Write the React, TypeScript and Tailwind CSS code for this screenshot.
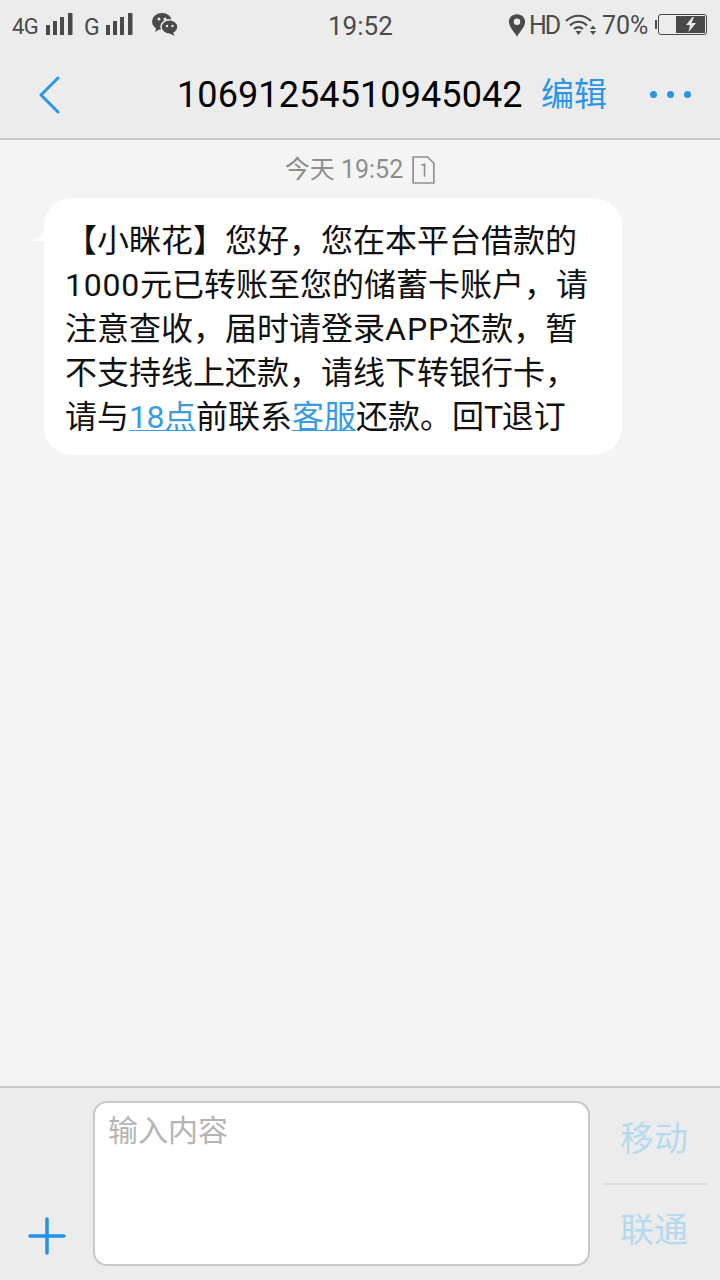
const cjk = "font-['Roboto','Noto_Sans_CJK_SC',sans-serif]";

function Bars({ className = "" }: { className?: string }) {
  return (
    <svg width="28" height="24" viewBox="0 0 28 24" className={className} fill="#4a4a4a">
      <rect x="0" y="12" width="4" height="10" />
      <rect x="7" y="8" width="4" height="14" />
      <rect x="14" y="4" width="4" height="18" />
      <rect x="22" y="0" width="4.5" height="22" />
    </svg>
  );
}

function WeChat() {
  return (
    <svg width="26" height="24" viewBox="0 0 26 24">
      <ellipse cx="10" cy="9.5" rx="10" ry="8.5" fill="#4a4a4a" />
      <path d="M4 15 L3.5 20 L9 16 Z" fill="#4a4a4a" />
      <ellipse cx="17.5" cy="15" rx="8.5" ry="7.2" fill="#4a4a4a" stroke="#ececec" strokeWidth="1.5" />
      <path d="M21 20 L22.5 24 L17 21 Z" fill="#4a4a4a" />
      <circle cx="7" cy="7" r="1.5" fill="#ececec" />
      <circle cx="13" cy="7" r="1.5" fill="#ececec" />
      <circle cx="15" cy="14" r="1.2" fill="#ececec" />
      <circle cx="20.5" cy="14" r="1.2" fill="#ececec" />
    </svg>
  );
}

function Link({ children }: { children: React.ReactNode }) {
  return <span className="text-[#3a9be2] underline underline-offset-2 decoration-1">{children}</span>;
}

export default function App() {
  return (
    <div className={`${cjk} w-[720px] h-[1280px] flex flex-col bg-[#f4f4f4] overflow-hidden`}>
      <header className="h-[140px] shrink-0 bg-[#ececec] border-b-2 border-[#c8c8c8] flex flex-col">
        <div className="h-[50px] flex items-center justify-between pl-[12px] pr-[13px] text-[#4a4a4a] relative">
          <div className="flex items-center">
            <span className="text-[22px] leading-none mt-[4px] w-[33px] tracking-[-0.5px]">4G</span>
            <Bars className="ml-[1px]" />
            <span className="text-[23px] leading-none mt-[4px] ml-[10px] w-[21px]">G</span>
            <Bars className="ml-[1px]" />
            <span className="ml-[18px] -mt-[2px]"><WeChat /></span>
          </div>
          <span className="absolute left-[328px] top-[8px] text-[26px] leading-[36px]">19:52</span>
          <div className="flex items-center">
            <svg width="18" height="26" viewBox="0 0 20 26" className="mr-[3px]">
              <path d="M10 1 C4.5 1 1 5 1 9.5 C1 15 7 21 10 26 C13 21 19 15 19 9.5 C19 5 15.5 1 10 1 Z" fill="#4a4a4a" />
              <circle cx="10" cy="9.5" r="3.6" fill="#ececec" />
            </svg>
            <span className="text-[25px] leading-none tracking-[-2px] w-[36px]">HD</span>
            <svg width="32" height="24" viewBox="0 0 32 24" fill="none" stroke="#4a4a4a" strokeWidth="2.2">
              <path d="M1 8 C8 1 19 1 26 8" />
              <path d="M5 12.5 C10 7.5 17 7.5 22 12.5" />
              <path d="M9 16 C12 13.5 15 13.5 18 16" />
              <path d="M10.5 18 L13.5 22 L16.5 18 Z" fill="#4a4a4a" stroke="none" />
              <path d="M25 16 L28 12.5 L31 16 Z M25 18 L28 22 L31 18 Z" fill="#4a4a4a" stroke="none" />
            </svg>
            <span className="text-[25px] leading-none ml-[5px] w-[48px]">70%</span>
            <div className="ml-[8px] relative w-[49px] h-[21px] border-[1.5px] border-[#4a4a4a] rounded-[3px] mt-[-1px]">
              <span className="absolute -left-[4px] top-[5px] w-[2px] h-[9px] bg-[#4a4a4a]" />
              <div className="absolute right-[1px] top-[1px] bottom-[1px] w-[29px] bg-[#4a4a4a] flex items-center justify-center">
                <svg width="12" height="15" viewBox="0 0 12 15"><path d="M7.5 0 L1 8 H5 L3.5 15 L11 6 H6.5 L9 0 Z" fill="#ececec" /></svg>
              </div>
            </div>
          </div>
        </div>
        <div className="flex-1 flex items-center relative">
          <svg width="22" height="38" viewBox="0 0 22 38" className="ml-[39px] mt-[1px]" fill="none" stroke="#2b96e8" strokeWidth="3" strokeLinecap="round" strokeLinejoin="round">
            <path d="M19 2 L2 19 L19 36" />
          </svg>
          <span className="absolute left-[177px] top-[24px] text-[36px] leading-[42px] text-black tracking-[0.1px]">10691254510945042</span>
          <span className="absolute left-[541px] top-[23px] text-[33px] leading-[44px] text-[#2b96e8]">编辑</span>
          <div className="absolute left-[650px] top-[41px] flex gap-[10px]">
            <span className="w-[7px] h-[7px] rounded-full bg-[#2b96e8]" />
            <span className="w-[7px] h-[7px] rounded-full bg-[#2b96e8]" />
            <span className="w-[7px] h-[7px] rounded-full bg-[#2b96e8]" />
          </div>
        </div>
      </header>

      <main className="flex-1 flex flex-col">
        <div className="h-[58px] flex items-start justify-center pt-[14px]">
          <div className="flex items-center gap-[9px] text-[25px] leading-[32px] text-[#8e8e8e]">
            <span>今天 19:52</span>
            <svg width="23" height="28" viewBox="0 0 22 27" fill="none" stroke="#8e8e8e" strokeWidth="1.6">
              <path d="M1 1 H15 L21 7 V26 H1 Z" />
              <path d="M9 9 L12 8 V20" />
            </svg>
          </div>
        </div>
        <div className="relative ml-[44px] w-[578px] h-[257px] bg-white rounded-[28px] pl-[21px] pt-[21px] text-[32px] leading-[44px] text-[#111111] whitespace-nowrap">
          <svg width="14" height="12" viewBox="0 0 14 12" className="absolute -left-[12px] top-[31px]"><path d="M14 0 V12 H0 C5 10 10 6 14 0 Z" fill="#fff" /></svg>
          <div>【小眯花】您好，您在本平台借款的</div>
          <div><span className="tracking-[0.75px]">1000</span>元已转账至您的储蓄卡账户，请</div>
          <div>注意查收，届时请登录<span className="tracking-[1px]">APP</span>还款，暂</div>
          <div>不支持线上还款，请线下转银行卡，</div>
          <div>请与<Link><span className="tracking-[-0.5px]">18</span>点</Link>前联系<Link>客服</Link>还款。回<span className="tracking-[-1.5px]">T</span>退订</div>
        </div>
      </main>

      <footer className="h-[194px] shrink-0 bg-[#ececec] border-t-2 border-[#c8c8c8] flex items-start">
        <div className="w-[93px] h-full flex justify-center pt-[129px] pl-[1px]">
          <svg width="38" height="38" viewBox="0 0 38 38" stroke="#2193e6" strokeWidth="3.5" strokeLinecap="round">
            <path d="M19 2 V36 M2 19 H36" />
          </svg>
        </div>
        <div className="w-[497px] h-[165px] mt-[13px] bg-white border-2 border-[#c8c8c8] rounded-[14px] px-[13px] pt-[8px] text-[30px] leading-[40px] text-[#b4b4b4]">
          输入内容
        </div>
        <div className="ml-[12px] w-[106px] mt-[13px] flex flex-col items-center text-[34px] text-[#b5d9ee]">
          <div className="h-[84px] w-full flex items-center justify-center border-b-2 border-[#dcdcdc] pr-[2px] pb-[6px]">移动</div>
          <div className="h-[90px] w-full flex items-center justify-center pr-[2px]">联通</div>
        </div>
      </footer>
    </div>
  );
}
